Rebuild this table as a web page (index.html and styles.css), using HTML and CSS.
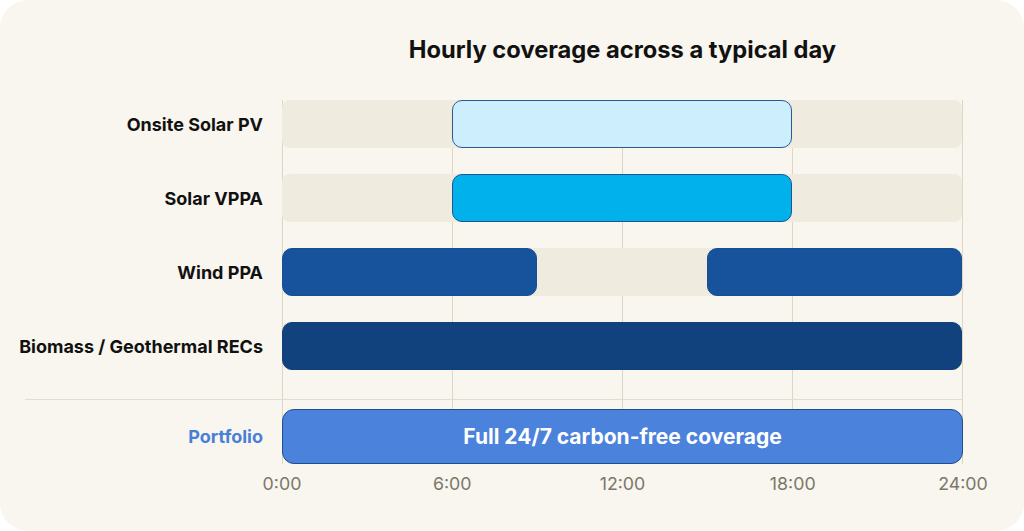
FILE: index.html
```html
<!DOCTYPE html>
<html lang="en">
<head>
<meta charset="utf-8">
<title>Hourly coverage across a typical day</title>
<link rel="stylesheet" href="styles.css">
</head>
<body>
<div class="card">
  <div class="chart">
    <h1 class="title">Hourly coverage across a typical day</h1>
    <div class="gridlines"></div>

    <div class="label r1">Onsite Solar PV</div>
    <div class="track r1">
      <div class="bar bar-onsite" style="grid-column: 7 / 19"></div>
    </div>

    <div class="label r2">Solar VPPA</div>
    <div class="track r2">
      <div class="bar bar-vppa" style="grid-column: 7 / 19"></div>
    </div>

    <div class="label r3">Wind PPA</div>
    <div class="track r3">
      <div class="bar bar-wind" style="grid-column: 1 / 10"></div>
      <div class="bar bar-wind" style="grid-column: 16 / 25"></div>
    </div>

    <div class="label r4">Biomass / Geothermal RECs</div>
    <div class="track r4 last">
      <div class="bar bar-bio" style="grid-column: 1 / 25"></div>
    </div>

    <div class="separator"></div>

    <div class="label portfolio-label">Portfolio</div>
    <div class="portfolio-bar">Full 24/7 carbon-free coverage</div>

    <div class="axis">
      <span>0:00</span>
      <span>6:00</span>
      <span>12:00</span>
      <span>18:00</span>
      <span>24:00</span>
    </div>
  </div>
</div>
</body>
</html>
```

FILE: styles.css
```css
html {
  background: #ffffff;
}

body {
  margin: 0;
  font-family: Inter, "Liberation Sans", sans-serif;
}

.card {
  width: 1024px;
  height: 531px;
  box-sizing: border-box;
  padding-top: 36px;
  background: #f8f6ee;
  border-radius: 28px;
  overflow: hidden;
}

.chart {
  display: grid;
  grid-template-columns: 263px 681px;
  column-gap: 19px;
}

.title {
  grid-column: 2;
  grid-row: 1;
  margin: 0 0 36px;
  text-align: center;
  font-size: 23.7px;
  line-height: 28px;
  font-weight: 700;
  color: #111111;
}

.gridlines {
  grid-column: 2;
  grid-row: 2 / 8;
  background: repeating-linear-gradient(to right, #dcd6c2 0 1px, transparent 1px 170px);
}

.label {
  grid-column: 1;
  height: 48px;
  display: flex;
  align-items: center;
  justify-content: flex-end;
  font-size: 18px;
  font-weight: 700;
  color: #111111;
  white-space: nowrap;
}

.r1 { grid-row: 2; }
.r2 { grid-row: 3; }
.r3 { grid-row: 4; }
.r4 { grid-row: 5; }

.track {
  grid-column: 2;
  position: relative;
  z-index: 1;
  width: 680px;
  height: 48px;
  margin-bottom: 26px;
  display: grid;
  grid-template-columns: repeat(24, 1fr);
  background: #efebdf;
  border-radius: 8px;
}

.track.last {
  margin-bottom: 29px;
}

.bar {
  grid-row: 1;
  box-sizing: border-box;
  border-radius: 10px;
  border: 1.5px solid transparent;
}

.bar-onsite {
  background: #cdeefd;
  border-color: #2b5a93;
}

.bar-vppa {
  background: #00b1ec;
  border-color: #1f5592;
}

.bar-wind {
  background: #17529c;
  border-color: #16508f;
}

.bar-bio {
  background: #12427e;
  border-color: #11407a;
}

.separator {
  grid-column: 1 / 3;
  grid-row: 6;
  position: relative;
  z-index: 1;
  height: 1px;
  margin: 0 0 9px 25px;
  background: #e2ddcc;
}

.portfolio-label {
  grid-row: 7;
  height: 55px;
  color: #4a7fd6;
}

.portfolio-bar {
  grid-column: 2;
  grid-row: 7;
  position: relative;
  z-index: 1;
  width: 681px;
  height: 55px;
  box-sizing: border-box;
  display: flex;
  align-items: center;
  justify-content: center;
  background: #4a82dc;
  border: 1.5px solid #1f4f8f;
  border-radius: 12px;
  color: #ffffff;
  font-size: 21px;
  font-weight: 700;
}

.axis {
  grid-column: 2;
  grid-row: 8;
  margin: 10px -30px 0;
  display: flex;
  justify-content: space-between;
}

.axis span {
  width: 60px;
  text-align: center;
  font-size: 17.8px;
  line-height: 20px;
  color: #7c776a;
}
```
